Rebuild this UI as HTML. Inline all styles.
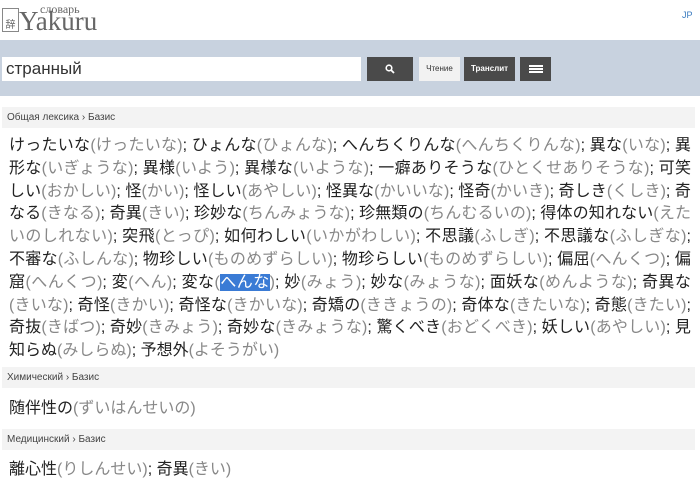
<!DOCTYPE html>
<html><head><meta charset="utf-8"><style>
body{margin:0;width:700px;height:479px;overflow:hidden;background:#fff;font-family:"Liberation Sans","Noto Sans CJK JP",sans-serif;position:relative}
.a{position:absolute}
.bar{position:absolute;left:2px;width:693px;height:21px;background:#f3f3f3;font-size:10px;color:#444;line-height:21px;padding-left:5px;box-sizing:border-box}
.t{position:absolute;left:9px;width:682px;font-size:16px;color:#222;line-height:22.8px}
.t div{white-space:nowrap;text-align-last:justify}
.t div.l{text-align-last:left}
.g{color:#888}
.hl{background:#3a7bd5;color:#fff}
.btn{position:absolute;top:57px;height:24px;background:#4a4a4a;color:#fff;font-size:8px;font-weight:bold;text-align:center;line-height:24px;box-sizing:border-box}
</style></head><body>
<div class="a" style="left:2px;top:8px;width:15px;height:22px;border:1px solid #888;font-size:10px;color:#666;line-height:30px;text-align:center;font-family:'Noto Sans CJK JP',sans-serif">辞</div>
<div class="a" style="left:19px;top:6px;font-family:'Liberation Serif',serif;font-size:27px;color:#666;line-height:30px">Yakuru</div>
<div class="a" style="left:40px;top:2px;font-family:'Liberation Serif',serif;font-size:12px;color:#666">словарь</div>
<div class="a" style="left:682px;top:10px;font-size:9px;color:#3b7bbf">JP</div>
<div class="a" style="left:0;top:40px;width:700px;height:56px;background:#c8d2df"></div>
<div class="a" style="left:2px;top:57px;width:359px;height:24px;background:#fff;font-size:17px;line-height:24px;color:#333;padding-left:4px;box-sizing:border-box">странный</div>
<div class="btn" style="left:367px;width:46px"><svg width="10" height="10" viewBox="0 0 10 10" style="vertical-align:middle"><circle cx="4" cy="4" r="2.8" stroke="#fff" stroke-width="1.6" fill="none"/><path d="M6 6L9 9" stroke="#fff" stroke-width="1.8"/></svg></div>
<div class="btn" style="left:419px;width:41px;background:#f2f2f2;color:#333;font-weight:normal">Чтение</div>
<div class="btn" style="left:464px;width:51px">Транслит</div>
<div class="btn" style="left:520px;width:31px"><svg width="14" height="8" style="vertical-align:middle"><g fill="#fff"><rect x="0" y="0" width="14" height="2"/><rect x="0" y="3" width="14" height="2"/><rect x="0" y="6" width="14" height="2"/></g></svg></div>
<div class="bar" style="top:107px">Общая лексика › Базис</div>
<div class="t" style="top:135px">
<div>けったいな<span class="g">(けったいな)</span>; ひょんな<span class="g">(ひょんな)</span>; へんちくりんな<span class="g">(へんちくりんな)</span>; 異な<span class="g">(いな)</span>; 異</div>
<div>形な<span class="g">(いぎょうな)</span>; 異様<span class="g">(いよう)</span>; 異様な<span class="g">(いような)</span>; 一癖ありそうな<span class="g">(ひとくせありそうな)</span>; 可笑</div>
<div>しい<span class="g">(おかしい)</span>; 怪<span class="g">(かい)</span>; 怪しい<span class="g">(あやしい)</span>; 怪異な<span class="g">(かいいな)</span>; 怪奇<span class="g">(かいき)</span>; 奇しき<span class="g">(くしき)</span>; 奇</div>
<div>なる<span class="g">(きなる)</span>; 奇異<span class="g">(きい)</span>; 珍妙な<span class="g">(ちんみょうな)</span>; 珍無類の<span class="g">(ちんむるいの)</span>; 得体の知れない<span class="g">(えた</span></div>
<div><span class="g">いのしれない)</span>; 突飛<span class="g">(とっぴ)</span>; 如何わしい<span class="g">(いかがわしい)</span>; 不思議<span class="g">(ふしぎ)</span>; 不思議な<span class="g">(ふしぎな)</span>;</div>
<div>不審な<span class="g">(ふしんな)</span>; 物珍しい<span class="g">(ものめずらしい)</span>; 物珍らしい<span class="g">(ものめずらしい)</span>; 偏屈<span class="g">(へんくつ)</span>; 偏</div>
<div>窟<span class="g">(へんくつ)</span>; 変<span class="g">(へん)</span>; 変な<span class="g">(</span><span class="hl">へんな</span><span class="g">)</span>; 妙<span class="g">(みょう)</span>; 妙な<span class="g">(みょうな)</span>; 面妖な<span class="g">(めんような)</span>; 奇異な</div>
<div><span class="g">(きいな)</span>; 奇怪<span class="g">(きかい)</span>; 奇怪な<span class="g">(きかいな)</span>; 奇矯の<span class="g">(ききょうの)</span>; 奇体な<span class="g">(きたいな)</span>; 奇態<span class="g">(きたい)</span>;</div>
<div>奇抜<span class="g">(きばつ)</span>; 奇妙<span class="g">(きみょう)</span>; 奇妙な<span class="g">(きみょうな)</span>; 驚くべき<span class="g">(おどくべき)</span>; 妖しい<span class="g">(あやしい)</span>; 見</div>
<div class="l">知らぬ<span class="g">(みしらぬ)</span>; 予想外<span class="g">(よそうがい)</span></div>
</div>
<div class="bar" style="top:367px">Химический › Базис</div>
<div class="t" style="top:398px"><div class="l">随伴性の<span class="g">(ずいはんせいの)</span></div></div>
<div class="bar" style="top:429px">Медицинский › Базис</div>
<div class="t" style="top:459px"><div class="l">離心性<span class="g">(りしんせい)</span>; 奇異<span class="g">(きい)</span></div></div>
</body></html>
